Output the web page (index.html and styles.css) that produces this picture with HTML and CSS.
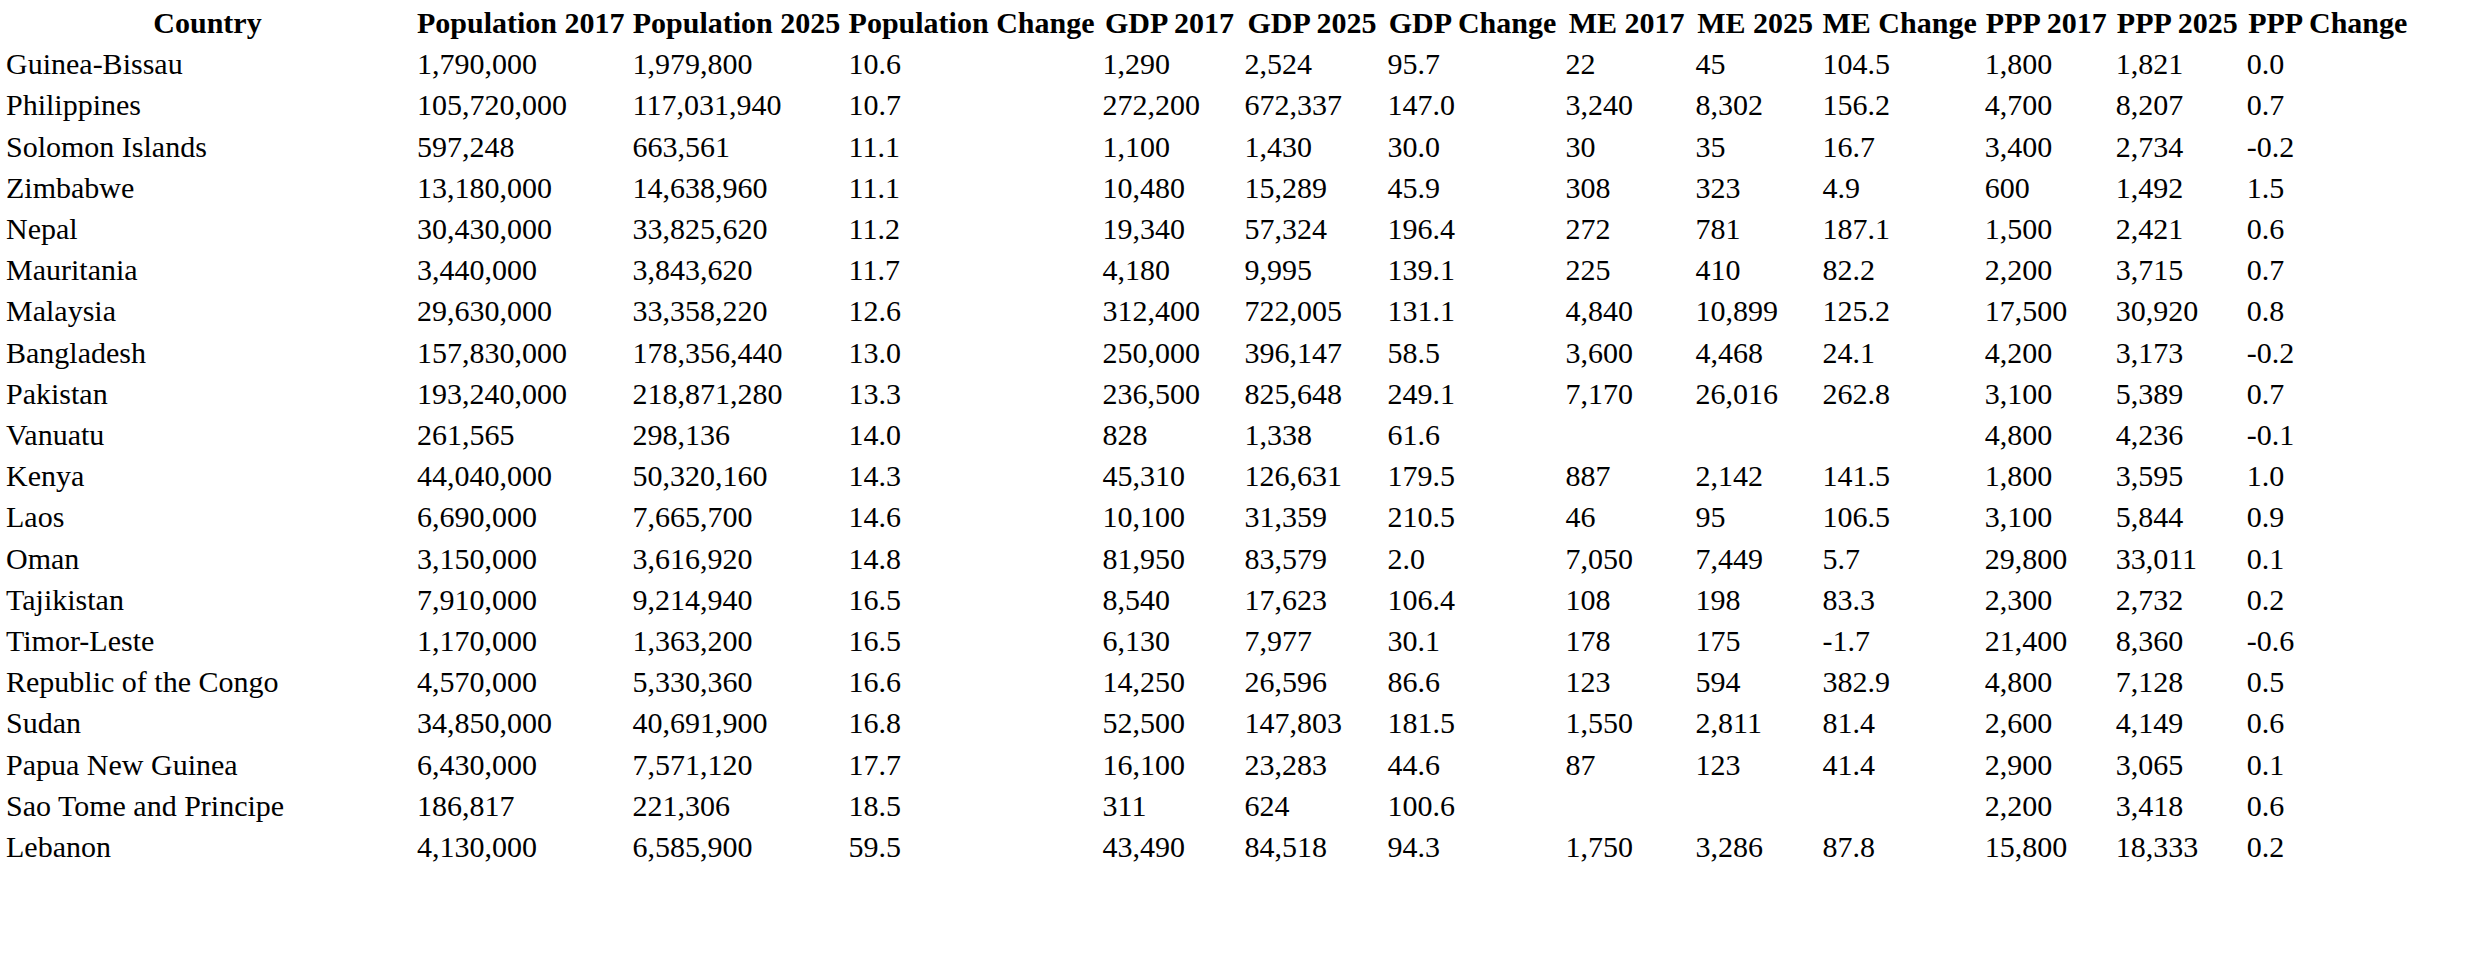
FILE: index.html
```html
<!DOCTYPE html>
<html>
<head>
<meta charset="utf-8">
<title>Country data</title>
<link rel="stylesheet" href="styles.css">
</head>
<body>
<table class="data">
<thead>
<tr><th class="col-country">Country</th><th class="col-pop17">Population 2017</th><th class="col-pop25">Population 2025</th><th class="col-popch">Population Change</th><th class="col-gdp17">GDP 2017</th><th class="col-gdp25">GDP 2025</th><th class="col-gdpch">GDP Change</th><th class="col-me17">ME 2017</th><th class="col-me25">ME 2025</th><th class="col-mech">ME Change</th><th class="col-ppp17">PPP 2017</th><th class="col-ppp25">PPP 2025</th><th class="col-pppch">PPP Change</th></tr>
</thead>
<tbody>
<tr><td>Guinea-Bissau</td><td>1,790,000</td><td>1,979,800</td><td>10.6</td><td>1,290</td><td>2,524</td><td>95.7</td><td>22</td><td>45</td><td>104.5</td><td>1,800</td><td>1,821</td><td>0.0</td></tr>
<tr><td>Philippines</td><td>105,720,000</td><td>117,031,940</td><td>10.7</td><td>272,200</td><td>672,337</td><td>147.0</td><td>3,240</td><td>8,302</td><td>156.2</td><td>4,700</td><td>8,207</td><td>0.7</td></tr>
<tr><td>Solomon Islands</td><td>597,248</td><td>663,561</td><td>11.1</td><td>1,100</td><td>1,430</td><td>30.0</td><td>30</td><td>35</td><td>16.7</td><td>3,400</td><td>2,734</td><td>-0.2</td></tr>
<tr><td>Zimbabwe</td><td>13,180,000</td><td>14,638,960</td><td>11.1</td><td>10,480</td><td>15,289</td><td>45.9</td><td>308</td><td>323</td><td>4.9</td><td>600</td><td>1,492</td><td>1.5</td></tr>
<tr><td>Nepal</td><td>30,430,000</td><td>33,825,620</td><td>11.2</td><td>19,340</td><td>57,324</td><td>196.4</td><td>272</td><td>781</td><td>187.1</td><td>1,500</td><td>2,421</td><td>0.6</td></tr>
<tr><td>Mauritania</td><td>3,440,000</td><td>3,843,620</td><td>11.7</td><td>4,180</td><td>9,995</td><td>139.1</td><td>225</td><td>410</td><td>82.2</td><td>2,200</td><td>3,715</td><td>0.7</td></tr>
<tr><td>Malaysia</td><td>29,630,000</td><td>33,358,220</td><td>12.6</td><td>312,400</td><td>722,005</td><td>131.1</td><td>4,840</td><td>10,899</td><td>125.2</td><td>17,500</td><td>30,920</td><td>0.8</td></tr>
<tr><td>Bangladesh</td><td>157,830,000</td><td>178,356,440</td><td>13.0</td><td>250,000</td><td>396,147</td><td>58.5</td><td>3,600</td><td>4,468</td><td>24.1</td><td>4,200</td><td>3,173</td><td>-0.2</td></tr>
<tr><td>Pakistan</td><td>193,240,000</td><td>218,871,280</td><td>13.3</td><td>236,500</td><td>825,648</td><td>249.1</td><td>7,170</td><td>26,016</td><td>262.8</td><td>3,100</td><td>5,389</td><td>0.7</td></tr>
<tr><td>Vanuatu</td><td>261,565</td><td>298,136</td><td>14.0</td><td>828</td><td>1,338</td><td>61.6</td><td></td><td></td><td></td><td>4,800</td><td>4,236</td><td>-0.1</td></tr>
<tr><td>Kenya</td><td>44,040,000</td><td>50,320,160</td><td>14.3</td><td>45,310</td><td>126,631</td><td>179.5</td><td>887</td><td>2,142</td><td>141.5</td><td>1,800</td><td>3,595</td><td>1.0</td></tr>
<tr><td>Laos</td><td>6,690,000</td><td>7,665,700</td><td>14.6</td><td>10,100</td><td>31,359</td><td>210.5</td><td>46</td><td>95</td><td>106.5</td><td>3,100</td><td>5,844</td><td>0.9</td></tr>
<tr><td>Oman</td><td>3,150,000</td><td>3,616,920</td><td>14.8</td><td>81,950</td><td>83,579</td><td>2.0</td><td>7,050</td><td>7,449</td><td>5.7</td><td>29,800</td><td>33,011</td><td>0.1</td></tr>
<tr><td>Tajikistan</td><td>7,910,000</td><td>9,214,940</td><td>16.5</td><td>8,540</td><td>17,623</td><td>106.4</td><td>108</td><td>198</td><td>83.3</td><td>2,300</td><td>2,732</td><td>0.2</td></tr>
<tr><td>Timor-Leste</td><td>1,170,000</td><td>1,363,200</td><td>16.5</td><td>6,130</td><td>7,977</td><td>30.1</td><td>178</td><td>175</td><td>-1.7</td><td>21,400</td><td>8,360</td><td>-0.6</td></tr>
<tr><td>Republic of the Congo</td><td>4,570,000</td><td>5,330,360</td><td>16.6</td><td>14,250</td><td>26,596</td><td>86.6</td><td>123</td><td>594</td><td>382.9</td><td>4,800</td><td>7,128</td><td>0.5</td></tr>
<tr><td>Sudan</td><td>34,850,000</td><td>40,691,900</td><td>16.8</td><td>52,500</td><td>147,803</td><td>181.5</td><td>1,550</td><td>2,811</td><td>81.4</td><td>2,600</td><td>4,149</td><td>0.6</td></tr>
<tr><td>Papua New Guinea</td><td>6,430,000</td><td>7,571,120</td><td>17.7</td><td>16,100</td><td>23,283</td><td>44.6</td><td>87</td><td>123</td><td>41.4</td><td>2,900</td><td>3,065</td><td>0.1</td></tr>
<tr><td>Sao Tome and Principe</td><td>186,817</td><td>221,306</td><td>18.5</td><td>311</td><td>624</td><td>100.6</td><td></td><td></td><td></td><td>2,200</td><td>3,418</td><td>0.6</td></tr>
<tr><td>Lebanon</td><td>4,130,000</td><td>6,585,900</td><td>59.5</td><td>43,490</td><td>84,518</td><td>94.3</td><td>1,750</td><td>3,286</td><td>87.8</td><td>15,800</td><td>18,333</td><td>0.2</td></tr>
</tbody>
</table>
</body>
</html>
```

FILE: styles.css
```css
html, body {
  margin: 0;
  padding: 0;
  background: #ffffff;
}

body {
  font-family: "Liberation Serif", "Times New Roman", serif;
  font-size: 30px;
  color: #000000;
}

.data {
  border-collapse: separate;
  border-spacing: 4px;
}

.data th,
.data td {
  padding: 2px;
  line-height: 33.2px;
  white-space: nowrap;
  vertical-align: middle;
}

.data th {
  font-weight: bold;
  text-align: center;
}

.data td {
  text-align: left;
}

.col-country { width: 403px; }
.col-pop17 { width: 207px; }
.col-pop25 { width: 208px; }
.col-popch { width: 246px; }
.col-gdp17 { width: 134px; }
.col-gdp25 { width: 135px; }
.col-gdpch { width: 170px; }
.col-me17 { width: 122px; }
.col-me25 { width: 119px; }
.col-mech { width: 152px; }
.col-ppp17 { width: 123px; }
.col-ppp25 { width: 123px; }
.col-pppch { width: 162px; }
```
